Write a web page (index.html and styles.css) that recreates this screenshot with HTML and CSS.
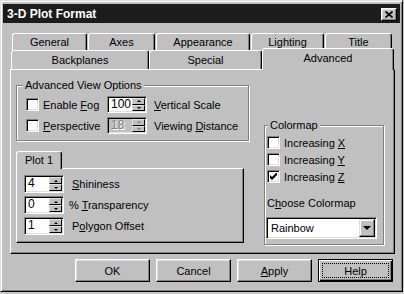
FILE: index.html
```html
<!DOCTYPE html>
<html>
<head>
  <title>3-D Plot Format</title>
  <link rel="stylesheet" href="styles.css">
</head>
<body>

<div class="window">
  <div class="titlebar">
    <span class="title">3-D Plot Format</span>
    <button class="close-btn">
      <svg width="8" height="7" viewBox="0 0 8 7"><path d="M0.5 0.5 L7.5 6.5 M7.5 0.5 L0.5 6.5" stroke="#000" stroke-width="1.7" fill="none"/></svg>
    </button>
  </div>

  <div class="dialog-body">
    <div class="tab-row back">
      <div class="tab">General</div>
      <div class="tab">Axes</div>
      <div class="tab">Appearance</div>
      <div class="tab">Lighting</div>
      <div class="tab">Title</div>
    </div>
    <div class="tab-row front">
      <div class="tab">Backplanes</div>
      <div class="tab">Special</div>
      <div class="tab selected">Advanced</div>
    </div>

    <div class="tab-panel">
      <div class="left-col">
        <div class="group view-group">
          <span class="group-title">Advanced View Options</span>
          <div class="view-row">
            <label class="check"><span class="box"></span><span>Enable <u>F</u>og</span></label>
            <div class="spin">
              <span class="spin-value">100</span>
              <span class="spin-btns"><span class="spin-up"></span><span class="spin-down"></span></span>
            </div>
            <span class="field-label"><u>V</u>ertical Scale</span>
          </div>
          <div class="view-row">
            <label class="check"><span class="box"></span><span><u>P</u>erspective</span></label>
            <div class="spin disabled">
              <span class="spin-value">18</span>
              <span class="spin-btns"><span class="spin-up"></span><span class="spin-down"></span></span>
            </div>
            <span class="field-label">Viewing <u>D</u>istance</span>
          </div>
        </div>

        <div class="plot-tabs">
          <div class="tab plot-tab">Plot 1</div>
        </div>
        <div class="plot-panel">
          <div class="plot-row">
            <div class="spin">
              <span class="spin-value">4</span>
              <span class="spin-btns"><span class="spin-up"></span><span class="spin-down"></span></span>
            </div>
            <span class="field-label"><u>S</u>hininess</span>
          </div>
          <div class="plot-row">
            <div class="spin">
              <span class="spin-value">0</span>
              <span class="spin-btns"><span class="spin-up"></span><span class="spin-down"></span></span>
            </div>
            <span class="field-label pct">% <u>T</u>ransparency</span>
          </div>
          <div class="plot-row">
            <div class="spin">
              <span class="spin-value">1</span>
              <span class="spin-btns"><span class="spin-up"></span><span class="spin-down"></span></span>
            </div>
            <span class="field-label">P<u>o</u>lygon Offset</span>
          </div>
        </div>
      </div>

      <div class="group colormap">
        <span class="group-title">Colormap</span>
        <label class="check cm-row"><span class="box"></span><span>Increasing <u>X</u></span></label>
        <label class="check cm-row"><span class="box"></span><span>Increasing <u>Y</u></span></label>
        <label class="check cm-row">
          <span class="box">
            <svg width="7" height="7" viewBox="0 0 7 7"><polygon points="0,2 2,4 7,-1 7,2 2,7 0,5" fill="#000"/></svg>
          </span>
          <span>Increasing <u>Z</u></span>
        </label>
        <div class="choose-label">C<u>h</u>oose Colormap</div>
        <div class="combo">
          <span class="combo-value">Rainbow</span>
          <span class="combo-btn"></span>
        </div>
      </div>
    </div>

    <div class="button-row">
      <button class="btn">OK</button>
      <button class="btn">Cancel</button>
      <button class="btn"><span><u>A</u>pply</span></button>
      <button class="btn default"><span class="focus">Help</span></button>
    </div>
  </div>
</div>

</body>
</html>
```

FILE: styles.css
```css
* {
  box-sizing: border-box;
}

body {
  margin: 0;
  background: #c8c8c8;
  color: #000;
  font-family: "Liberation Sans", Arial, sans-serif;
  font-size: 11px;
}

u {
  text-underline-offset: 1px;
}

.window {
  width: 403px;
  height: 292px;
  background: #c0c0c0;
  border: 1px solid;
  border-color: #dfdfdf #000 #000 #dfdfdf;
  box-shadow: inset 1px 1px #fff, inset -1px -1px #808080;
  padding: 3px 2px 2px 2px;
}

/* title bar */
.titlebar {
  display: flex;
  align-items: center;
  justify-content: space-between;
  height: 19px;
  padding: 1px 3px 0 4px;
  background: #1c1c1c;
}

.title {
  color: #fff;
  font-weight: bold;
  font-size: 12px;
}

.close-btn {
  display: flex;
  align-items: center;
  justify-content: center;
  width: 16px;
  height: 13px;
  padding: 0;
  background: #c0c0c0;
  border: 1px solid;
  border-color: #fff #000 #000 #fff;
  box-shadow: inset -1px -1px #808080, inset 1px 1px #dfdfdf;
}

.dialog-body {
  padding: 10px 0 0 7px;
}

/* tabs */
.tab-row {
  display: grid;
}

.tab-row.back {
  grid-template-columns: 75px 67px 94px 73px 67px;
  column-gap: 1px;
  margin-left: 2px;
  height: 17px;
}

.tab-row.front {
  grid-template-columns: 138px 113px 132px;
  grid-template-rows: 19px;
  margin-left: 1px;
}

.tab {
  background: #c0c0c0;
  border: 1px solid;
  border-bottom: none;
  border-color: #fff #000 transparent #fff;
  border-radius: 3px 3px 0 0;
  box-shadow: inset -1px 0 #808080;
  text-align: center;
}

.back .tab {
  line-height: 16px;
}

.front .tab {
  padding-top: 1px;
  line-height: 17px;
}

.tab.selected {
  position: relative;
  z-index: 1;
  height: 22px;
  margin-top: -2px;
  margin-bottom: -1px;
}

.tab-panel {
  display: flex;
  justify-content: space-between;
  width: 385px;
  height: 185px;
  border: 1px solid;
  border-color: #fff #000 #000 #fff;
  box-shadow: inset -1px -1px #808080;
  padding: 15px 10px 8px 5px;
}

.left-col {
  width: 233px;
}

/* group boxes */
.group {
  position: relative;
  border: 1px solid #808080;
  box-shadow: inset 1px 1px #fff, 1px 1px #fff;
}

.group-title {
  position: absolute;
  top: -7px;
  left: 6px;
  padding: 0 2px;
  line-height: 13px;
  background: #c0c0c0;
}

.view-group {
  display: grid;
  row-gap: 4px;
  padding: 10px 0 6px 9px;
}

.view-row {
  display: grid;
  grid-template-columns: 81px 40px 1fr;
  align-items: center;
  height: 17px;
}

.check {
  display: flex;
  align-items: center;
  gap: 4px;
}

.box {
  display: flex;
  align-items: center;
  justify-content: center;
  width: 13px;
  height: 13px;
  background: #fff;
  border: 1px solid;
  border-color: #808080 #fff #fff #808080;
  box-shadow: inset 1px 1px #000, inset -1px -1px #dfdfdf;
}

.field-label {
  padding-left: 7px;
}

/* spin boxes */
.spin {
  display: flex;
  width: 40px;
  height: 17px;
  padding: 1px;
  background: #fff;
  border: 1px solid;
  border-color: #808080 #fff #fff #808080;
  box-shadow: inset 1px 1px #000, inset -1px -1px #dfdfdf;
}

.spin-value {
  flex: 1;
  padding-left: 2px;
  font-size: 12px;
  line-height: 13px;
}

.spin.disabled {
  background: #c0c0c0;
  color: #808080;
}

.spin.disabled .spin-value {
  text-shadow: 1px 1px #fff;
}

.spin-btns {
  display: flex;
  flex-direction: column;
  width: 13px;
}

.spin-btns span {
  flex: 1;
  display: flex;
  align-items: center;
  justify-content: center;
  background: #c0c0c0;
  border: 1px solid;
  border-color: #dfdfdf #000 #000 #dfdfdf;
}

.spin-up::after {
  content: "";
  border-left: 2px solid transparent;
  border-right: 2px solid transparent;
  border-bottom: 2px solid #000;
}

.spin-down::after {
  content: "";
  border-left: 2px solid transparent;
  border-right: 2px solid transparent;
  border-top: 2px solid #000;
}

.spin.disabled .spin-up::after {
  border-bottom-color: #808080;
}

.spin.disabled .spin-down::after {
  border-top-color: #808080;
}

/* plot sub-tab */
.plot-tabs {
  display: flex;
  margin-top: 10px;
}

.tab.plot-tab {
  position: relative;
  z-index: 1;
  width: 46px;
  height: 18px;
  margin-bottom: -1px;
  line-height: 16px;
}

.plot-panel {
  display: grid;
  row-gap: 3px;
  width: 228px;
  border: 1px solid;
  border-color: #fff #000 #000 #fff;
  box-shadow: inset -1px -1px #808080;
  padding: 6px 0 7px 7px;
}

.plot-row {
  display: flex;
  align-items: center;
  height: 18px;
}

.plot-row .spin {
  height: 18px;
}

.plot-row .field-label {
  padding-left: 8px;
}

.plot-row .field-label.pct {
  padding-left: 5px;
}

/* colormap */
.colormap {
  align-self: flex-end;
  width: 120px;
  padding: 8px 0 5px 2px;
}

.colormap .group-title {
  left: 3px;
}

.cm-row {
  height: 17px;
}

.choose-label {
  margin-top: 12px;
  line-height: 13px;
}

.combo {
  display: flex;
  width: 111px;
  height: 22px;
  margin: 7px 0 0 -1px;
  padding: 1px;
  background: #fff;
  border: 1px solid;
  border-color: #808080 #fff #fff #808080;
  box-shadow: inset 1px 1px #000, inset -1px -1px #dfdfdf;
}

.combo-value {
  flex: 1;
  padding-left: 3px;
  line-height: 18px;
}

.combo-btn {
  display: flex;
  align-items: center;
  justify-content: center;
  width: 16px;
  background: #c0c0c0;
  border: 1px solid;
  border-color: #dfdfdf #000 #000 #dfdfdf;
  box-shadow: inset -1px -1px #808080, inset 1px 1px #fff;
}

.combo-btn::after {
  content: "";
  border-left: 4px solid transparent;
  border-right: 4px solid transparent;
  border-top: 4px solid #000;
}

/* buttons */
.button-row {
  display: flex;
  justify-content: flex-end;
  gap: 6px;
  width: 385px;
  margin-top: 5px;
  padding-right: 2px;
}

.btn {
  display: flex;
  align-items: center;
  justify-content: center;
  width: 75px;
  height: 23px;
  padding: 0;
  font: inherit;
  color: #000;
  background: #c0c0c0;
  border: 1px solid;
  border-color: #fff #000 #000 #fff;
  box-shadow: inset -1px -1px #808080, inset 1px 1px #dfdfdf;
}

.btn.default {
  border-color: #000;
  box-shadow: inset 1px 1px #fff, inset -1px -1px #000, inset -2px -2px #808080;
  padding: 3px;
}

.focus {
  display: flex;
  align-items: center;
  justify-content: center;
  width: 100%;
  height: 100%;
  border: 1px dotted #000;
}
```
